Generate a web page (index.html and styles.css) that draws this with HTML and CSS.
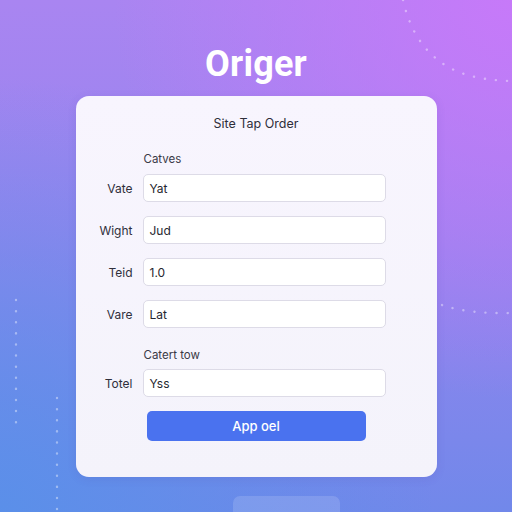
FILE: index.html
```html
<!DOCTYPE html>
<html lang="en">
<head>
<meta charset="utf-8">
<title>Origer</title>
<link rel="stylesheet" href="styles.css">
</head>
<body>
<svg class="deco" width="512" height="512" viewBox="0 0 512 512" aria-hidden="true">
  <path d="M403 0 Q412 40 438 60 Q462 80 512 81" />
  <path d="M442 305 Q468 314 512 313" />
  <path d="M16 300 L16 426" />
  <path d="M57 398 L57 512" />
</svg>
<main class="page">
  <h1 class="brand">Origer</h1>
  <section class="card">
    <h2 class="card-title">Site Tap Order</h2>
    <div class="section-label">Catves</div>
    <div class="row"><label class="lbl">Vate</label><div class="field">Yat</div></div>
    <div class="row"><label class="lbl">Wight</label><div class="field">Jud</div></div>
    <div class="row"><label class="lbl">Teid</label><div class="field">1.0</div></div>
    <div class="row"><label class="lbl">Vare</label><div class="field">Lat</div></div>
    <div class="section-label second">Catert tow</div>
    <div class="row"><label class="lbl">Totel</label><div class="field">Yss</div></div>
    <button class="btn">App oel</button>
  </section>
  <div class="ghost"></div>
</main>
</body>
</html>
```
FILE: styles.css
```css
html, body {
  margin: 0;
  padding: 0;
  width: 512px;
  height: 512px;
  overflow: hidden;
}
body {
  position: relative;
  font-family: "Inter", "Noto Sans", sans-serif;
  background:
    radial-gradient(circle at 100% 0%, rgba(202, 120, 250, 0.9) 0%, rgba(202, 120, 250, 0) 55%),
    radial-gradient(circle at 0% 100%, rgba(88, 144, 233, 0.9) 0%, rgba(88, 144, 233, 0) 60%),
    linear-gradient(180deg, #a985f1 0%, #9684ee 45%, #7188ea 100%);
}
.deco {
  position: absolute;
  left: 0;
  top: 0;
  fill: none;
  stroke: rgba(255, 255, 255, 0.4);
  stroke-width: 2.4;
  stroke-linecap: round;
  stroke-dasharray: 0.1 11;
}
.page {
  position: relative;
  display: flex;
  flex-direction: column;
  align-items: center;
}
.brand {
  margin: 42px 0 0 0;
  height: 54px;
  line-height: 44px;
  font-family: "Roboto", "Liberation Sans", sans-serif;
  font-weight: 700;
  font-size: 36px;
  color: #ffffff;
  letter-spacing: 0.2px;
}
.card {
  box-sizing: border-box;
  width: 361px;
  height: 381px;
  border-radius: 13px;
  background: linear-gradient(180deg, #f8f5fe 0%, #f4f3fb 100%);
  box-shadow: 0 2px 10px rgba(80, 60, 160, 0.12);
  padding: 20px 0 0 0;
  display: flex;
  flex-direction: column;
}
.card-title {
  margin: 0;
  text-align: center;
  font-size: 12.5px;
  line-height: 16px;
  font-weight: 400;
  color: #2e2e3a;
}
.section-label {
  margin: 20px 0 8px 68px;
  font-size: 11.5px;
  line-height: 14px;
  color: #3a3a46;
}
.section-label.second {
  margin-top: 6px;
  margin-bottom: 7px;
}
.row {
  display: flex;
  align-items: center;
  gap: 10px;
  margin-bottom: 14px;
}
.lbl {
  width: 57px;
  text-align: right;
  font-size: 12px;
  color: #2f2f3b;
}
.field {
  box-sizing: border-box;
  width: 243px;
  height: 28px;
  background: #ffffff;
  border: 1px solid #dddbe7;
  border-radius: 5px;
  padding: 0 6px;
  display: flex;
  align-items: center;
  font-size: 12px;
  color: #26262f;
}
.btn {
  align-self: center;
  width: 219px;
  height: 30px;
  border: none;
  border-radius: 5px;
  background: #4a72ef;
  color: #ffffff;
  font-family: "Inter", "Noto Sans", sans-serif;
  font-weight: 500;
  font-size: 13px;
}
.ghost {
  margin-top: 19px;
  margin-left: 61px;
  width: 107px;
  height: 30px;
  border-radius: 7px;
  background: rgba(255, 255, 255, 0.14);
}
```
